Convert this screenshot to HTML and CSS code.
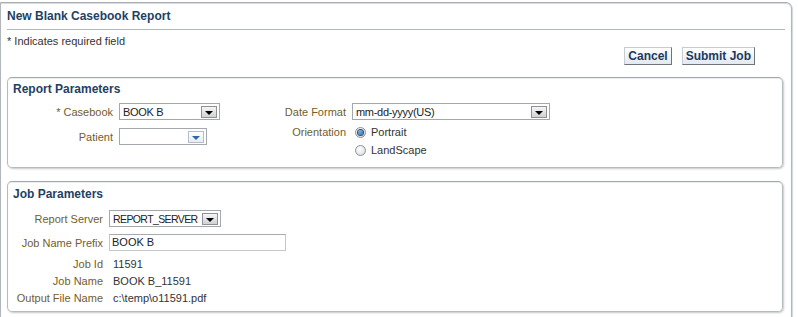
FILE: index.html
```html
<!DOCTYPE html>
<html lang="en">
<head>
  <meta charset="UTF-8">
  <title>New Blank Casebook Report</title>
  <link rel="stylesheet" href="styles.css">
</head>
<body>
  <div class="page">
    <h1 class="title">New Blank Casebook Report</h1>
    <div class="required-note">* Indicates required field</div>
    <div class="actions">
      <button class="btn">Cancel</button>
      <button class="btn">Submit Job</button>
    </div>

    <div class="panel report">
      <h2 class="panel-title">Report Parameters</h2>
      <div class="cols">
        <div class="col col-left">
          <div class="row">
            <label class="lbl">* Casebook</label>
            <div class="select w-casebook"><span class="val">BOOK B</span><span class="arrow"></span></div>
          </div>
          <div class="row row-gap">
            <label class="lbl">Patient</label>
            <div class="select combo w-patient"><span class="val"></span><span class="arrow"></span></div>
          </div>
        </div>
        <div class="col col-right">
          <div class="row">
            <label class="lbl">Date Format</label>
            <div class="select w-date"><span class="val">mm-dd-yyyy(US)</span><span class="arrow"></span></div>
          </div>
          <div class="row row-radio">
            <label class="lbl">Orientation</label>
            <div class="radio-group">
              <div class="radio-item"><span class="radio checked"></span>Portrait</div>
              <div class="radio-item"><span class="radio"></span>LandScape</div>
            </div>
          </div>
        </div>
      </div>
    </div>

    <div class="panel job">
      <h2 class="panel-title">Job Parameters</h2>
      <div class="row first">
        <label class="lbl">Report Server</label>
        <div class="select w-server"><span class="val">REPORT_SERVER</span><span class="arrow"></span></div>
      </div>
      <div class="row row-prefix">
        <label class="lbl">Job Name Prefix</label>
        <div class="text-input">BOOK B</div>
      </div>
      <div class="row text-row first-text">
        <label class="lbl">Job Id</label>
        <span class="value">11591</span>
      </div>
      <div class="row text-row">
        <label class="lbl">Job Name</label>
        <span class="value">BOOK B_11591</span>
      </div>
      <div class="row text-row">
        <label class="lbl">Output File Name</label>
        <span class="value">c:\temp\o11591.pdf</span>
      </div>
    </div>
  </div>
</body>
</html>
```

FILE: styles.css
```css
body {
  margin: 0;
  padding-top: 2px;
  background: #fff;
  font-family: 'Liberation Sans', Arial, sans-serif;
  font-size: 11px;
  color: #333;
}

.page {
  width: 778px;
  padding: 0 6px 20px 6px;
  border: 1px solid #b3b7bc;
  border-top-color: #a9adb2;
  border-bottom: none;
  border-top-right-radius: 6px;
  box-shadow: 1px 1px 1px #d4d7da, inset 0 1px 1px #d6d9dc;
}

.title {
  margin: 5px 0 0 0;
  padding-bottom: 5px;
  font-size: 12px;
  line-height: 16px;
  font-weight: bold;
  color: #233f63;
  border-bottom: 1px solid #b0b7bf;
}

.required-note {
  margin-top: 4px;
  line-height: 14px;
  color: #333;
}

.actions {
  display: flex;
  justify-content: flex-end;
  gap: 10px;
  margin-top: -1px;
  padding-right: 30px;
}

.btn {
  height: 18px;
  padding: 0 3px;
  font-family: 'Liberation Sans', Arial, sans-serif;
  font-size: 12px;
  font-weight: bold;
  color: #1c3a5e;
  background: linear-gradient(#ffffff, #e4e9f0);
  border: 1px solid #c6ccd3;
  border-right-color: #6f747a;
  border-bottom-color: #6f747a;
  border-radius: 0;
  line-height: 14px;
}

.panel {
  margin-right: 2px;
  border: 1px solid #b6bbc0;
  border-top-color: #a3a8ad;
  border-radius: 5px;
  box-shadow: 1px 1px 2px rgba(0, 0, 0, 0.22), inset 0 1px 1px rgba(0, 0, 0, 0.08);
}

.panel.report {
  margin-top: 12px;
  padding: 3px 0 8px 0;
}

.panel.job {
  margin-top: 13px;
  padding: 4px 0 4px 0;
}

.panel-title {
  margin: 0 0 0 5px;
  font-size: 12px;
  line-height: 16px;
  font-weight: bold;
  color: #233f63;
}

.cols {
  display: flex;
  margin-top: 6px;
}

.col-left {
  width: 230px;
}

.row {
  display: flex;
  align-items: center;
  gap: 6px;
}

.lbl {
  text-align: right;
  color: #735d2c;
  white-space: nowrap;
}

.col-left .lbl {
  width: 105px;
}

.col-right .lbl {
  width: 108px;
}

.job .lbl {
  width: 95px;
}

.row-gap {
  margin-top: 8px;
}

.row-radio {
  align-items: flex-start;
  margin-top: 3px;
}

.row-radio .lbl {
  line-height: 18px;
}

.select {
  height: 15px;
  display: flex;
  align-items: center;
  justify-content: space-between;
  border: 1px solid #a2a8ae;
  background: #fff;
  color: #222;
}

.select .val {
  padding-left: 3px;
  letter-spacing: -0.3px;
  white-space: nowrap;
}

.w-server .val {
  font-size: 10.5px;
  letter-spacing: -0.6px;
}

.select .arrow {
  flex: none;
  width: 14px;
  height: 10px;
  margin-right: 2px;
  display: flex;
  align-items: center;
  justify-content: center;
  border: 1px solid #8e9196;
  background: linear-gradient(#f6f6f6, #d2d2d2);
}

.select .arrow::after {
  content: '';
  margin-top: 2px;
  border-left: 4px solid transparent;
  border-right: 4px solid transparent;
  border-top: 4px solid #000;
}

.select.combo .arrow {
  border-color: #b5bdc6;
  background: linear-gradient(#ffffff, #e6ecf3);
}

.select.combo .arrow::after {
  border-top-color: #2d67a6;
}

.w-casebook { width: 99px; }
.w-patient { width: 86px; }
.w-date { width: 196px; }
.w-server { width: 110px; }

.radio-group {
  display: flex;
  flex-direction: column;
}

.radio-item {
  display: flex;
  align-items: center;
  gap: 5px;
  height: 18px;
  padding-left: 3px;
  color: #333;
}

.radio {
  width: 9px;
  height: 9px;
  border: 1px solid #8d9196;
  border-radius: 50%;
  background: radial-gradient(circle at 40% 35%, #ffffff, #d3d6da);
  display: flex;
  align-items: center;
  justify-content: center;
}

.radio.checked::after {
  content: '';
  width: 5px;
  height: 5px;
  border-radius: 50%;
  background: radial-gradient(circle at 40% 35%, #7fb3e6, #1f5a9c);
  box-shadow: 0 0 0 1px #2c4f78;
}

.job .row.first {
  margin-top: 8px;
}

.row-prefix {
  margin-top: 7px;
}

.text-input {
  width: 173px;
  height: 15px;
  line-height: 15px;
  padding-left: 2px;
  border: 1px solid #c3c8cd;
  border-top-color: #a5abb1;
  color: #222;
}

.text-row {
  line-height: 17px;
}

.first-text {
  margin-top: 5px;
}

.value {
  padding-left: 4px;
  color: #333;
}
```
